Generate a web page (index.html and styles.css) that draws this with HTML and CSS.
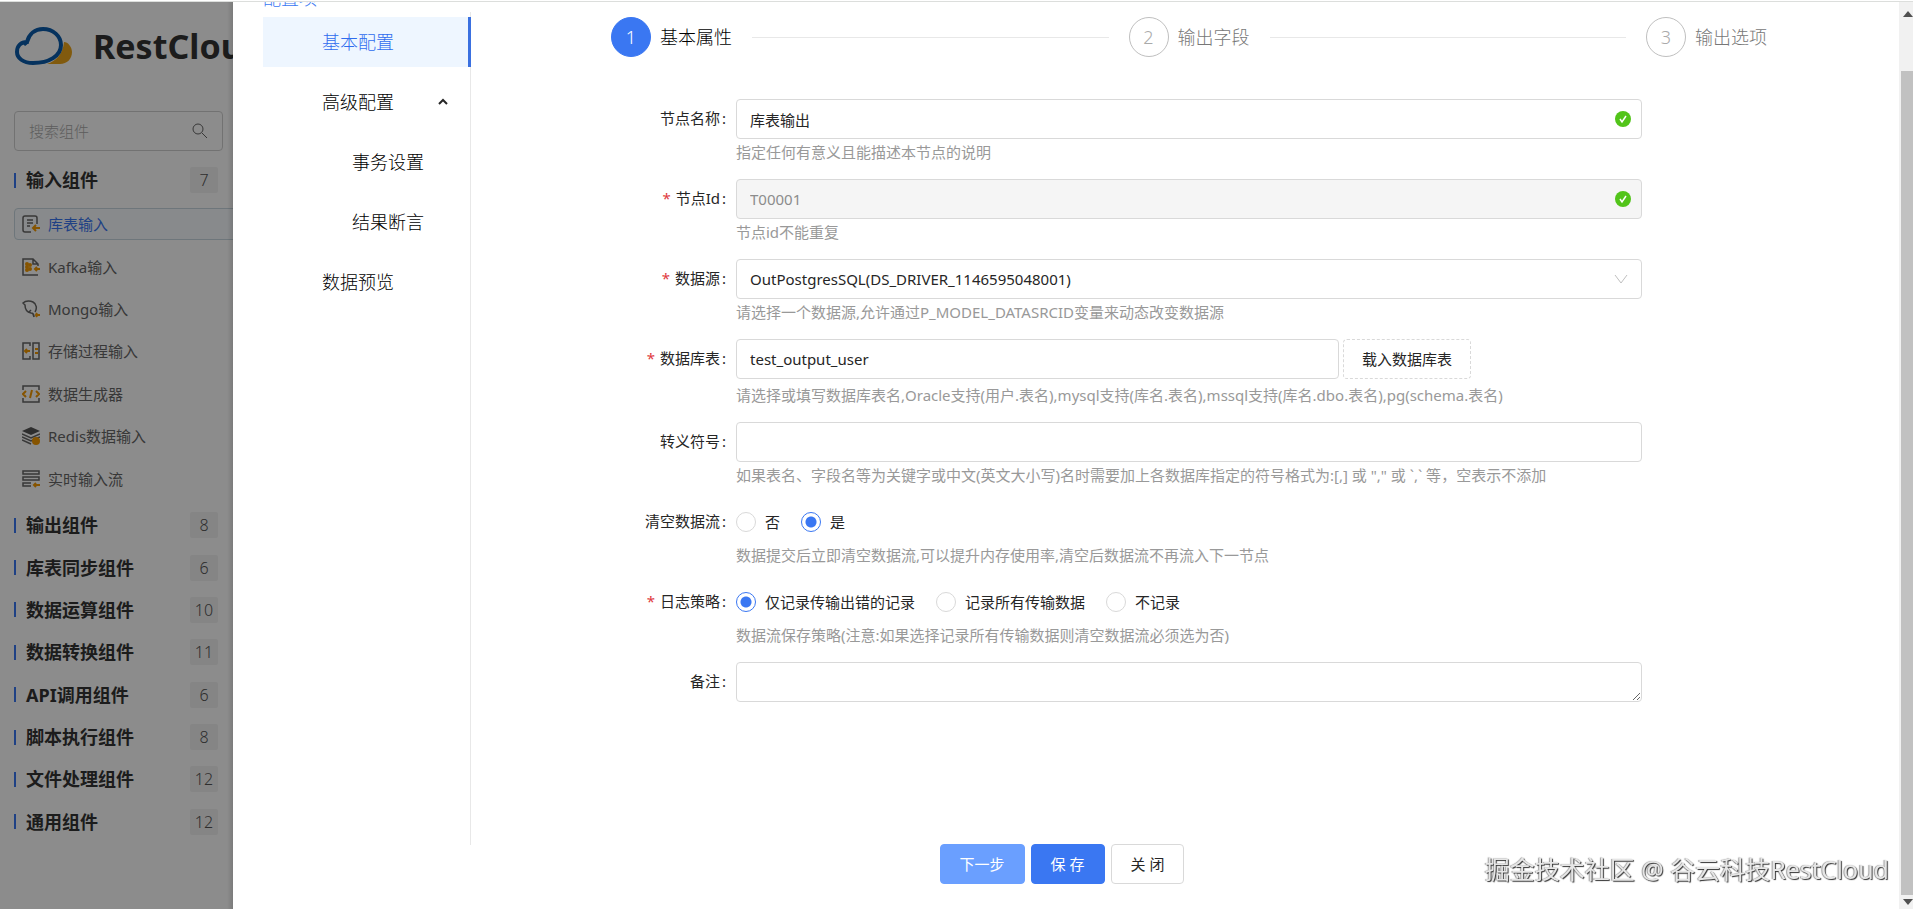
FILE: index.html
```html
<!DOCTYPE html>
<html lang="zh-CN">
<head>
    <meta charset="UTF-8">
    <meta name="viewport" content="width=device-width, initial-scale=1.0">
    <title>RestCloud</title>
    <link rel="stylesheet" href="styles.css">
</head>
<body>
<div class="app">
    <aside class="sidebar">
        <div class="brand">
            <svg class="logo" viewBox="0 0 59 40">
                <path d="M33 38 C42 35 49 28 50 16 C54 16 58 21 58 26 C58 33 53 38 46 38 Z" fill="#eba51a"/>
                <path d="M19 37 C9 37 3 32 3 26 C3 20 7 16 13 16 C15 8 21 3 29 3 C39 3 47 10 47 19 C47 30 35 37 19 37 Z" fill="none" stroke="#0a5bab" stroke-width="4"/>
                <path d="M13 16 C12 18 11 18 10 19" fill="none" stroke="#0a5bab" stroke-width="3"/>
            </svg>
            <span class="brand-name">RestCloud</span>
        </div>
        <div class="search">
            <input type="text" placeholder="搜索组件" aria-label="搜索组件">
            <svg viewBox="0 0 16 16"><circle cx="6" cy="6" r="5"/><path d="M10 10 L15 15"/></svg>
        </div>
        <div class="group open"><b>输入组件</b><span class="count">7</span></div>
        <div class="items">
            <a class="item active" href="#">
                <svg viewBox="0 0 18 18"><path d="M9 17 H3 Q1 17 1 15 V3 Q1 1 3 1 H13 Q15 1 15 3 V9 M5 5 H11 M5 8 H11 M5 11 H8"/><path class="o" d="M18 13 H11 M14 10 L11 13 L14 16"/></svg>
                <span>库表输入</span></a>
            <a class="item" href="#">
                <svg viewBox="0 0 18 18"><path d="M16 17 H1 V1 H11 L16 6 V8 M11 1 V6 H16"/><path class="o" d="M18 11 H13 M15 9 L13 11 L15 13"/><circle class="d" cx="5" cy="6" r="2"/><circle class="d" cx="5" cy="12" r="2"/><circle class="d" cx="5" cy="9" r="2"/><circle class="d" cx="8" cy="7" r="2"/><circle class="d" cx="8" cy="11" r="2"/></svg>
                <span>Kafka输入</span></a>
            <a class="item" href="#">
                <svg viewBox="0 0 18 18"><path d="M12 17 C12 14 11 13 9 13 C4 12 3 8 3 5 L1 3 C4 0 9 1 11 2 C15 4 15 9 13 12 M7 12 L9 10 M12 17 L11 14"/><path class="o" d="M18 15 H14 M15 13 L14 15 L15 17"/></svg>
                <span>Mongo输入</span></a>
            <a class="item" href="#">
                <svg viewBox="0 0 18 18"><path d="M8 4 V1 H1 V17 H8 V14 M11 1 H17 V17 H11 Z"/><path class="o" d="M8 9 H3 M5 7 L3 9 L5 11 M13 7 H16 M13 11 H16"/></svg>
                <span>存储过程输入</span></a>
            <a class="item" href="#">
                <svg viewBox="0 0 18 18"><path d="M1 5 V1 H17 V5 M1 13 V17 H17 V13"/><path class="o" d="M4 6 L1 9 L4 12 M14 6 L17 9 L14 12 M10 5 L8 13"/></svg>
                <span>数据生成器</span></a>
            <a class="item" href="#">
                <svg viewBox="0 0 18 18"><path class="f" d="M9 0 L18 4 L9 8 L0 4 Z"/><path d="M0 7 L9 11 L18 7 M0 10 L9 14 L18 10 M0 13 L9 17"/><circle class="d" cx="14" cy="14" r="4"/></svg>
                <span>Redis数据输入</span></a>
            <a class="item" href="#">
                <svg viewBox="0 0 18 18"><path d="M1 1 H17 V4 H1 Z M1 7 H17 V10 H1 Z M9 13 H1 V16 H9"/><path class="o" d="M18 15 H12 M14 13 L12 15 L14 17"/></svg>
                <span>实时输入流</span></a>
        </div>
        <div class="groups">
            <div class="group"><b>输出组件</b><span class="count">8</span></div>
            <div class="group"><b>库表同步组件</b><span class="count">6</span></div>
            <div class="group"><b>数据运算组件</b><span class="count">10</span></div>
            <div class="group"><b>数据转换组件</b><span class="count">11</span></div>
            <div class="group"><b>API调用组件</b><span class="count">6</span></div>
            <div class="group"><b>脚本执行组件</b><span class="count">8</span></div>
            <div class="group"><b>文件处理组件</b><span class="count">12</span></div>
            <div class="group"><b>通用组件</b><span class="count">12</span></div>
        </div>
        <div class="mask"></div>
    </aside>

    <section class="drawer">
        <div class="drawer-body">
            <nav class="config">
                <h2>配置项</h2>
                <div class="config-list">
                    <a class="active" href="#">基本配置</a>
                    <a href="#">高级配置
                        <svg viewBox="0 0 10 8"><path d="M1 6 L5 2 L9 6"/></svg>
                    </a>
                    <a class="sub" href="#">事务设置</a>
                    <a class="sub" href="#">结果断言</a>
                    <a href="#">数据预览</a>
                </div>
            </nav>
            <main>
                <ol class="steps">
                    <li class="current"><span class="num">1</span><span>基本属性</span></li>
                    <li><span class="num">2</span><span>输出字段</span></li>
                    <li><span class="num">3</span><span>输出选项</span></li>
                </ol>
                <form>
                    <div class="row">
                        <label for="nodeName">节点名称</label>
                        <div class="field">
                            <div class="control">
                                <input type="text" id="nodeName" value="库表输出">
                                <svg class="ok" viewBox="0 0 16 16"><circle cx="8" cy="8" r="8"/><path d="M5 8 L7 11 L11 5"/></svg>
                            </div>
                            <p>指定任何有意义且能描述本节点的说明</p>
                        </div>
                    </div>
                    <div class="row">
                        <label for="nodeId" class="required">节点Id</label>
                        <div class="field">
                            <div class="control">
                                <input type="text" id="nodeId" value="T00001" disabled>
                                <svg class="ok" viewBox="0 0 16 16"><circle cx="8" cy="8" r="8"/><path d="M5 8 L7 11 L11 5"/></svg>
                            </div>
                            <p>节点id不能重复</p>
                        </div>
                    </div>
                    <div class="row">
                        <label for="source" class="required">数据源</label>
                        <div class="field">
                            <div class="control">
                                <select id="source">
                                    <option>OutPostgresSQL(DS_DRIVER_1146595048001)</option>
                                </select>
                                <svg class="arrow" viewBox="0 0 14 10"><path d="M1 1 L7 9 L13 1"/></svg>
                            </div>
                            <p>请选择一个数据源,允许通过P_MODEL_DATASRCID变量来动态改变数据源</p>
                        </div>
                    </div>
                    <div class="row">
                        <label for="table" class="required">数据库表</label>
                        <div class="field">
                            <div class="control with-button">
                                <input type="text" id="table" value="test_output_user">
                                <button type="button" class="dashed">载入数据库表</button>
                            </div>
                            <p>请选择或填写数据库表名,Oracle支持(用户.表名),mysql支持(库名.表名),mssql支持(库名.dbo.表名),pg(schema.表名)</p>
                        </div>
                    </div>
                    <div class="row">
                        <label for="escape">转义符号</label>
                        <div class="field">
                            <div class="control"><input type="text" id="escape"></div>
                            <p>如果表名、字段名等为关键字或中文(英文大小写)名时需要加上各数据库指定的符号格式为:[,] 或 "," 或 `,` 等，空表示不添加</p>
                        </div>
                    </div>
                    <div class="row" role="radiogroup" aria-labelledby="clearLabel">
                        <span class="label" id="clearLabel">清空数据流</span>
                        <div class="field">
                            <div class="control">
                                <label class="radio"><input type="radio" name="clear">否</label>
                                <label class="radio"><input type="radio" name="clear" checked>是</label>
                            </div>
                            <p>数据提交后立即清空数据流,可以提升内存使用率,清空后数据流不再流入下一节点</p>
                        </div>
                    </div>
                    <div class="row" role="radiogroup" aria-labelledby="logLabel">
                        <span class="label required" id="logLabel">日志策略</span>
                        <div class="field">
                            <div class="control">
                                <label class="radio"><input type="radio" name="log" checked>仅记录传输出错的记录</label>
                                <label class="radio"><input type="radio" name="log">记录所有传输数据</label>
                                <label class="radio"><input type="radio" name="log">不记录</label>
                            </div>
                            <p>数据流保存策略(注意:如果选择记录所有传输数据则清空数据流必须选为否)</p>
                        </div>
                    </div>
                    <div class="row">
                        <label for="remark">备注</label>
                        <div class="field">
                            <div class="control"><textarea id="remark"></textarea></div>
                        </div>
                    </div>
                </form>
            </main>
        </div>
        <footer>
            <button type="button" class="next">下一步</button>
            <button type="button" class="save">保 存</button>
            <button type="button">关 闭</button>
        </footer>
    </section>

    <div class="scrollbar">
        <svg viewBox="0 0 10 6"><path d="M0 6 L5 0 L10 6 Z"/></svg>
        <div class="thumb"></div>
        <svg viewBox="0 0 10 6"><path d="M0 0 L5 6 L10 0 Z"/></svg>
    </div>
</div>
<div class="watermark">掘金技术社区 @ 谷云科技RestCloud</div>
</body>
</html>
```
FILE: styles.css
```css
* {
    box-sizing: border-box;
}

body {
    margin: 0;
    height: 100vh;
    overflow: hidden;
    padding-top: 1px;
    background: #fff;
    color: #262626;
    font-family: "Noto Sans", "Noto Sans CJK SC", sans-serif;
    font-size: 15px;
    line-height: 24px;
}

a {
    color: inherit;
    text-decoration: none;
}

svg {
    display: block;
    fill: none;
    flex: none;
}

input, select, textarea, button {
    font: inherit;
    color: inherit;
}

.app {
    display: flex;
    height: 100%;
    border-top: 1px solid #dcdedc;
}

/* left component list */
.sidebar {
    position: relative;
    width: 233px;
    flex: none;
    overflow: hidden;
    padding-left: 14px;
    white-space: nowrap;
}

.mask {
    position: absolute;
    inset: 0;
    background: rgba(0, 0, 0, 0.45);
}

.brand {
    display: flex;
    align-items: center;
    gap: 20px;
    height: 88px;
    margin-bottom: 21px;
}

.logo {
    width: 59px;
    height: 40px;
}

.brand-name {
    font-size: 34px;
    font-weight: 700;
    line-height: 40px;
    color: #333;
}

.search {
    display: flex;
    align-items: center;
    width: 209px;
    height: 40px;
    padding: 0 14px;
    margin-bottom: 8px;
    border: 1px solid #d0d0d0;
    border-radius: 4px;
}

.search input {
    flex: 1;
    min-width: 0;
    padding: 0;
    border: 0;
    outline: 0;
    background: none;
    font-weight: 300;
}

.search input::placeholder {
    color: #aaa;
}

.search svg {
    width: 16px;
    height: 16px;
    stroke: #666;
}

.group {
    display: flex;
    align-items: center;
    justify-content: space-between;
    width: 204px;
}

.group.open {
    height: 42px;
    margin-bottom: 2px;
}

.group b {
    display: flex;
    align-items: center;
    font-size: 18px;
    font-weight: 700;
    color: #333;
}

.group b::before {
    content: "";
    width: 2px;
    height: 15px;
    margin-right: 10px;
    background: #3a77f2;
}

.count {
    width: 28px;
    border-radius: 2px;
    background: #f2f2f2;
    font-size: 16px;
    font-weight: 300;
    line-height: 26px;
    text-align: center;
    color: #555;
}

.items {
    display: grid;
    grid-auto-rows: 1fr;
    height: 297px;
    margin-bottom: 4px;
}

.groups {
    display: grid;
    grid-auto-rows: 1fr;
    height: 339px;
}

.item {
    display: flex;
    align-items: center;
    align-self: center;
    gap: 8px;
    width: 240px;
    height: 32px;
    padding-left: 7px;
    border: 1px solid transparent;
    border-radius: 4px;
    color: #666;
}

.item.active {
    background: #f8fbff;
    border-color: #c8d8e0;
    color: #3a77f2;
}

.item svg {
    width: 18px;
    height: 18px;
    stroke: #666;
    stroke-width: 1.5;
}

.item .o {
    stroke: #f59a00;
    stroke-width: 2;
}

.item .d {
    fill: #f59a00;
    stroke: none;
}

.item .f {
    fill: #555;
    stroke: none;
}

/* drawer */
.drawer {
    position: relative;
    flex: 1;
    min-width: 0;
    overflow: hidden;
    background: #fff;
}

.sidebar::after {
    content: "";
    position: absolute;
    top: 0;
    right: 0;
    bottom: 0;
    width: 6px;
    background: linear-gradient(to right, transparent, rgba(0, 0, 0, 0.12));
}

.drawer-body {
    display: flex;
    padding-left: 30px;
}

.config {
    width: 208px;
    flex: none;
    margin-top: -17px;
    font-size: 18px;
    font-weight: 300;
    color: #000;
}

.config h2 {
    margin: 0;
    font-size: 18px;
    font-weight: 300;
    line-height: 27px;
    color: #3a77f2;
}

.config-list {
    min-height: 833px;
    padding-top: 5px;
    border-right: 1px solid #e8e8e8;
}

.config a {
    display: flex;
    align-items: center;
    justify-content: space-between;
    height: 50px;
    margin-bottom: 10px;
    padding: 0 22px 0 59px;
}

.config a.sub {
    padding-left: 89px;
}

.config a.active {
    margin-right: -1px;
    background: #eef6ff;
    border-right: 3px solid #3a70e0;
    color: #2f6cee;
}

.config svg {
    width: 10px;
    height: 8px;
    stroke: #262626;
    stroke-width: 2;
}

main {
    flex: 1;
    min-width: 0;
    padding-top: 15px;
}

.steps {
    display: flex;
    gap: 20px;
    margin: 0 132px 42px 140px;
    padding: 0;
    list-style: none;
    font-size: 18px;
    font-weight: 300;
}

.steps li {
    display: flex;
    align-items: center;
    flex: 1;
    color: #777;
}

.steps li:last-child {
    flex: none;
}

.steps li:not(:last-child)::after {
    content: "";
    flex: 1;
    height: 1px;
    margin-left: 20px;
    background: #e8e8e8;
}

.steps .num {
    width: 40px;
    height: 40px;
    margin-right: 9px;
    border: 1px solid #bfbfbf;
    border-radius: 50%;
    line-height: 38px;
    text-align: center;
    color: #aaa;
}

.steps .current {
    color: #000;
}

.steps .current .num {
    border-color: #3a77f2;
    background: #3a77f2;
    color: #fff;
}

form {
    margin-right: 257px;
}

.row {
    display: flex;
    margin-bottom: 13px;
}

.row > label, .row > .label {
    width: 265px;
    flex: none;
    padding-right: 10px;
    line-height: 38px;
    text-align: right;
}

.row > label::after, .row > .label::after {
    content: ":";
    margin-left: 2px;
}

.row > .required::before {
    content: "*";
    margin-right: 5px;
    color: #e03a3e;
}

.field {
    flex: 1;
    min-width: 0;
}

.control {
    display: flex;
    align-items: center;
    position: relative;
    height: 40px;
}

.control input[type="text"], .control select, .control textarea {
    width: 100%;
    height: 40px;
    margin: 0;
    padding: 0 13px;
    border: 1px solid #d9d9d9;
    border-radius: 4px;
    outline: 0;
    background: #fff;
    appearance: none;
}

.control input:disabled {
    background: #f5f5f5;
    color: #8c8c8c;
}

.ok {
    position: absolute;
    right: 11px;
    width: 16px;
    height: 16px;
    fill: #52c41a;
}

.ok path {
    fill: none;
    stroke: #fff;
    stroke-width: 1.5;
}

.arrow {
    position: absolute;
    right: 14px;
    width: 14px;
    height: 10px;
    stroke: #bfbfbf;
}

.control.with-button {
    gap: 4px;
    margin-bottom: 3px;
}

.control.with-button input[type="text"] {
    width: 603px;
}

.field p {
    margin: 0;
    line-height: 27px;
    color: #999;
    white-space: nowrap;
}

.radio {
    display: flex;
    align-items: center;
    margin-right: 21px;
}

.radio input {
    width: 20px;
    height: 20px;
    margin: 0 9px 0 0;
    border: 1px solid #d9d9d9;
    border-radius: 50%;
    appearance: none;
}

.radio input:checked {
    border-color: #3a77f2;
    background: radial-gradient(circle, #3a77f2 5px, #fff 6px);
}

button {
    height: 40px;
    padding: 0 19px;
    border: 1px solid #d9d9d9;
    border-radius: 4px;
    background: #fff;
    cursor: pointer;
}

button.dashed {
    flex: none;
    width: 128px;
    padding: 0;
    border-style: dashed;
}

footer {
    display: flex;
    justify-content: center;
    gap: 6px;
    margin-top: -1px;
    padding-right: 8px;
}

footer .next {
    border-color: #6a9fff;
    background: #6a9fff;
    color: #fff;
}

footer .save {
    border-color: #3a77f2;
    background: #3a77f2;
    color: #fff;
}

/* scrollbar */
.scrollbar {
    display: flex;
    flex-direction: column;
    align-items: flex-end;
    width: 14px;
    flex: none;
    overflow: hidden;
    padding: 9px 0 4px;
    background: #f1f1f1;
}

.scrollbar svg {
    width: 10px;
    height: 6px;
    fill: #505050;
}

.scrollbar .thumb {
    flex: 1;
    width: 12px;
    margin: 54px 0 4px;
    background: #c1c1c1;
}

.watermark {
    position: fixed;
    right: 24px;
    bottom: 22px;
    font-size: 25px;
    line-height: 36px;
    color: #e6e6e6;
    text-shadow: 1px 1px 1px #333, -1px 0 1px #999;
}
```
